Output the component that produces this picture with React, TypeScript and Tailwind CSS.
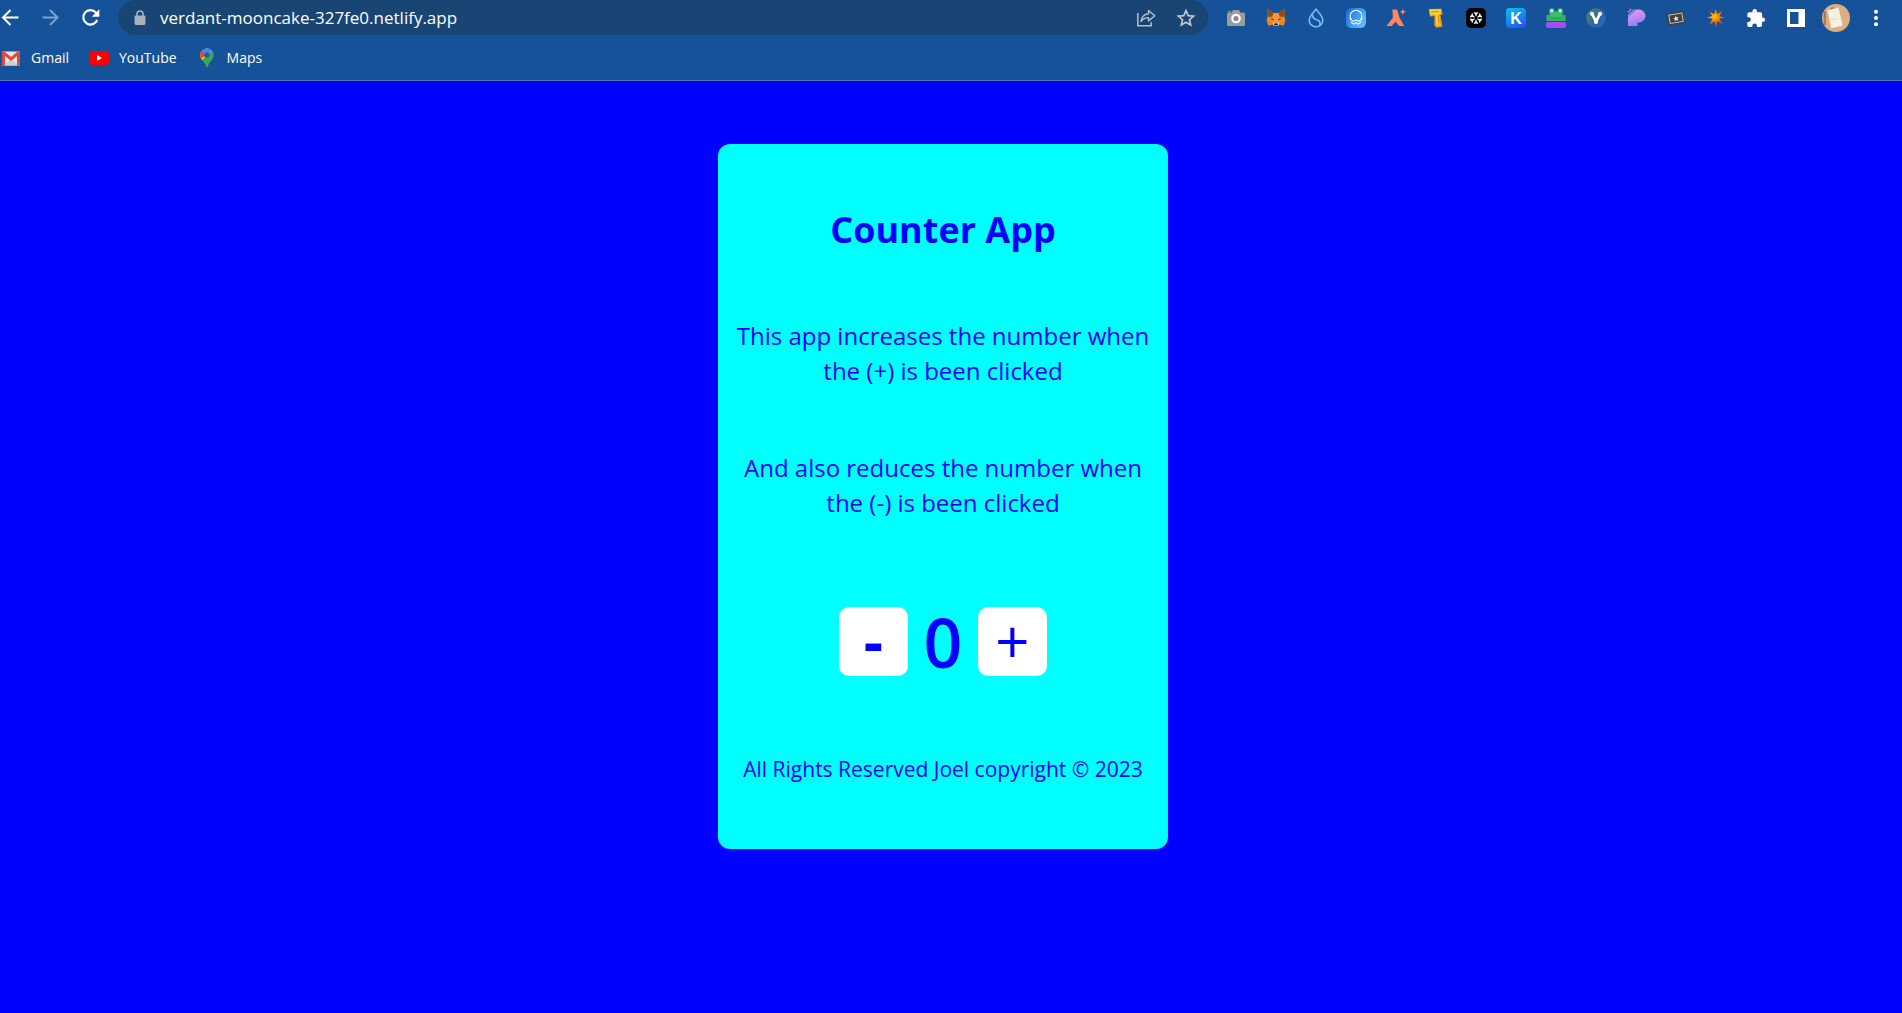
import { useState, type ReactNode } from "react";

const S = ({ children, size = 20 }: { children: ReactNode; size?: number }) => (
  <svg width={size} height={size} viewBox="0 0 20 20" fill="none" aria-hidden="true" className="shrink-0">
    {children}
  </svg>
);

const Back = () => (
  <S>
    <path d="M18.500 9.500H3.500M10.500 2 3 9.500l7.500 7.500" stroke="#fff" strokeWidth="2" />
  </S>
);
const Forward = () => (
  <S>
    <path d="M2.500 9.500H17M10 2l7.500 7.500L10 17" stroke="#7f9fc9" strokeWidth="2" />
  </S>
);
const Reload = () => (
  <S>
    <path d="M17.200 12A7.200 7.200 0 1 1 15.800 4.400L17 5.800" stroke="#fff" strokeWidth="2.200" />
    <path d="M19.300 1.200v7.500h-7.500z" fill="#fff" />
  </S>
);
const Lock = () => (
  <svg width="12" height="16" viewBox="0 0 12 16" fill="none" aria-hidden="true">
    <rect x="0.500" y="5.500" width="11" height="9.500" rx="1.400" fill="#a9b1ba" />
    <path d="M3 6V4a3 3 0 0 1 6 0v2" stroke="#a9b1ba" strokeWidth="1.600" />
  </svg>
);
const Share = () => (
  <S>
    <path d="M1.800 5v12.700h13.400v-3.500" stroke="#b6bfc9" strokeWidth="1.500" />
    <path d="M5 13.500c.6-4.600 3-7.300 7.500-7.700V2.500L18.800 7.700l-6.300 5.200V9.600c-3.500 0-5.500 1.100-7.500 3.900z" stroke="#b6bfc9" strokeWidth="1.400" strokeLinejoin="round" />
  </S>
);
const Star = () => (
  <S>
    <path d="M10 2.600l2.200 5 5.400.5-4.100 3.600 1.200 5.300L10 14.200 5.300 17l1.200-5.300L2.400 8.100l5.400-.5z" stroke="#c0c7cf" strokeWidth="1.700" />
  </S>
);
const Camera = () => (
  <S>
    <path d="M2.500 4.500h3.200L7 2h6l1.300 2.500h3.200A1.500 1.500 0 0 1 19 6v10.500a1.500 1.500 0 0 1-1.500 1.500h-15A1.500 1.500 0 0 1 1 16.500V6a1.500 1.500 0 0 1 1.500-1.500z" fill="#9c9c9c" />
    <path d="M2 2.800h3v1.700H2z" fill="#8a8a8a" />
    <circle cx="10" cy="10.500" r="3.700" stroke="#fff" strokeWidth="2.200" fill="#8b8b8b" />
  </S>
);
const Fox = () => (
  <S>
    <path d="M.8.8 8 5h4L19.200.8l-.7 8 .9 4-1.800 5-4.600-1.200L11.500 18h-3L7 16.600l-4.600 1.200-1.800-5 .9-4z" fill="#f0851f" />
    <path d="M.8.8 8 5.200 6 8.500l-4.300.5zM19.200.8 12 5.200l2 3.300 4.300.5z" fill="#8a4b1d" />
    <path d="M7.500 5h5l1 8-3.500 2-3.500-2z" fill="#f59638" />
    <path d="M4.500 10.500l3 .4.300 1.600zM15.500 10.500l-3 .4-.3 1.600z" fill="#233447" />
    <path d="M6.500 13.500l2 1.500h3l2-1.500-.5 3.400L11.500 18h-3L7 16.900z" fill="#d8cdc3" />
    <path d="M8.400 15.500h3.200l.3 1.800h-3.800z" fill="#161616" />
  </S>
);
const Drop = () => (
  <S>
    <path d="M10 1.200c2.300 3.200 6.800 6.800 6.800 11.200a6.800 6.400 0 0 1-13.600 0C3.200 8 7.700 4.400 10 1.200z" stroke="#6fbcf0" strokeWidth="1.700" />
    <path d="M6.600 6.500c-.4 3.200 1.500 4.500 4.200 5.300 2.500.8 3.800 2.400 3 5.300" stroke="#6fbcf0" strokeWidth="1.700" />
  </S>
);
const Wave = () => (
  <S>
    <defs>
      <linearGradient id="wave" x1="0" y1="0" x2="1" y2="0.600">
        <stop stopColor="#1767e8" />
        <stop offset="1" stopColor="#58bdfa" />
      </linearGradient>
    </defs>
    <rect width="20" height="20" rx="5.500" fill="url(#wave)" />
    <path d="M5.200 11.300a5.800 5.800 0 1 1 9.600 0" stroke="#fff" strokeWidth="1.200" />
    <path d="M3.500 10.800c1.600 0 2.600 2.400 4 2.400 1.200 0 1.400-1.200 2.500-1.200s1.300 1.200 2.500 1.200c1.400 0 2.400-2.400 4-2.400M4.500 14c1.400 0 2 2 3.200 2s1.200-1.300 2.300-1.300 1.100 1.300 2.300 1.300 1.800-2 3.200-2" stroke="#fff" strokeWidth="1.100" />
  </S>
);
const Peak = () => (
  <S>
    <path d="M6.300 1.500h4.900l2.300 8 4.700 8.500h-5L9.500 13.800 5.700 18H.5L7 9.500z" fill="#fb8663" />
    <path d="M16.800.6l.9 2.300 2.300.9-2.300.9-.9 2.300-.9-2.300-2.300-.9 2.300-.9z" fill="#fb8663" />
  </S>
);
const Hammer = () => (
  <S>
    <path d="M3 1 15.500.8l1 5.700-2.200.5 2.200 11.500-6 1.200L8.300 17.500 8.500 8l-4.700.4z" fill="#f29a1f" />
    <path d="M3.500 1.500l11-.3.300 4-2 .4 1.500 11.500-3.800.7L9.800 6.500l-5.600.3z" fill="#ffd633" />
    <path d="M5 4l8-.5M11.800 7l1.400 9.500" stroke="#e8731b" strokeWidth="1" />
  </S>
);
const Snow = () => (
  <S>
    <rect width="20" height="20" rx="5" fill="#000" />
    {[0, 60, 120, 180, 240, 300].map((a) => (
      <g key={a} transform={`rotate(${a} 10 10)`}>
        <path d="M10 8.300V4" stroke="#fff" strokeWidth="1.100" />
        <path d="M8 4.300l2 2.200 2-2.200" stroke="#fff" strokeWidth="1.100" />
      </g>
    ))}
  </S>
);
const KLogo = () => (
  <S>
    <defs>
      <linearGradient id="kl" x1="0.200" y1="0" x2="0.700" y2="1">
        <stop stopColor="#08bdf5" />
        <stop offset="1" stopColor="#2456ee" />
      </linearGradient>
    </defs>
    <rect width="20" height="20" rx="3.500" fill="url(#kl)" />
    <text x="10" y="16" textAnchor="middle" fontFamily="Liberation Sans, sans-serif" fontWeight="700" fontSize="16" fill="#fff">K</text>
  </S>
);
const Frog = () => (
  <S>
    <rect x="0" y="14" width="20" height="6" rx="2" fill="#a54cf5" />
    <path d="M3.500 3.500h13V13h-13z" fill="#3bbf6c" />
    <circle cx="5.800" cy="3" r="2.700" fill="#3bbf6c" />
    <circle cx="14.200" cy="3" r="2.700" fill="#3bbf6c" />
    <circle cx="5.800" cy="2.800" r="1.500" fill="#e9fff0" />
    <circle cx="14.200" cy="2.800" r="1.500" fill="#e9fff0" />
    <path d="M.5 7h3l2 2h9l2-2h3v6H.5z" fill="#34b566" />
    <path d="M5 10h10" stroke="#289552" strokeWidth="1" />
  </S>
);
const Vee = () => (
  <S>
    <defs>
      <linearGradient id="ve" x1="0" y1="0" x2="1" y2="1">
        <stop stopColor="#4a8f58" />
        <stop offset="0.600" stopColor="#2f66a4" />
        <stop offset="1" stopColor="#2d62c8" />
      </linearGradient>
    </defs>
    <circle cx="10" cy="10" r="9.800" fill="url(#ve)" />
    <path d="M6.300 6 10 14l3.700-8" stroke="#fff" strokeWidth="2.700" strokeLinecap="round" strokeLinejoin="round" />
    <circle cx="5.900" cy="5.800" r="2" fill="#fff" />
    <circle cx="14.100" cy="5.800" r="2" fill="#fff" />
    <circle cx="10" cy="14" r="2" fill="#fff" />
  </S>
);
const Pea = () => (
  <S>
    <defs>
      <linearGradient id="pe" x1="0.300" y1="0" x2="0.600" y2="1">
        <stop stopColor="#e79ae8" />
        <stop offset="1" stopColor="#8d7df5" />
      </linearGradient>
    </defs>
    <path d="M10 1.500h3a6.400 6.400 0 0 1 0 12.900h-1.500V18H2V9z" fill="url(#pe)" />
    <path d="M2 4.500 5.300 1M2 8 8.500 1.200" stroke="#c98ae8" strokeWidth="1.100" />
  </S>
);
const Ticket = () => (
  <S>
    <g transform="rotate(-9 10 10)">
      <rect x="1" y="4" width="18" height="12.500" rx="2" fill="#3f4142" />
      <rect x="3.400" y="6" width="13.200" height="8.500" stroke="#c9c9c9" strokeWidth="1" />
      <path d="M10 7.600l.8 1.900 2.100.2-1.600 1.300.5 2-1.800-1.100L8.200 13l.5-2-1.600-1.300 2.100-.2z" fill="#eee" />
    </g>
  </S>
);
const Spark = () => (
  <S>
    <defs>
      <radialGradient id="sp" cx="0.400" cy="0.400">
        <stop stopColor="#ffc400" />
        <stop offset="1" stopColor="#e8461b" />
      </radialGradient>
    </defs>
    <path d="M10 .5l1 5.500 5.300-3.200-2.900 5.400 6.100 1.300-6 1.300 3.500 5.700-5.600-3.500L10 19.500l-1.400-6.200-5.800 4 3.600-6.200L.5 9.500l5.700-1.400L3.200 3.500l5 2.800z" fill="url(#sp)" />
  </S>
);
const Puzzle = () => (
  <S>
    <path d="M17.300 9.500h-1.200V6a1.700 1.700 0 0 0-1.700-1.700h-3.500V3.100a2.200 2.200 0 0 0-4.400 0v1.200H3A1.700 1.700 0 0 0 1.400 6v3.300h1.200a2.300 2.300 0 0 1 0 4.600H1.300v3.300A1.700 1.700 0 0 0 3 18.900h3.300v-1.200a2.300 2.300 0 0 1 4.600 0v1.200h3.400a1.700 1.700 0 0 0 1.700-1.700v-3.400h1.300a2.200 2.200 0 0 0 0-4.300z" fill="#fff" />
  </S>
);
const Panel = () => (
  <S>
    <path d="M1 1h18v18H1zM4 4v12h8.500V4z" fill="#fff" fillRule="evenodd" />
  </S>
);
const Avatar = () => (
  <S size={28}>
    <circle cx="10" cy="10" r="10" fill="#dfae7e" />
    <path d="M2 5.500v9.500" stroke="#6e4b36" strokeWidth="1.600" strokeDasharray="0.700 0.700" />
    <path d="M3.600 4.300 12 2.300l3 13.200-8.500 2.200z" fill="#f6f1e2" stroke="#c8b595" strokeWidth="0.500" />
    <path d="M6.300 11.500l1-1.500 1 1.300 3.300-.8" stroke="#d0ccc4" strokeWidth="0.500" />
    <path d="M6.200 3.300l2.300-.6" stroke="#7b736a" strokeWidth="0.800" />
  </S>
);
const Dots = () => (
  <S>
    <circle cx="10" cy="3.700" r="2" fill="#fff" />
    <circle cx="10" cy="10" r="2" fill="#fff" />
    <circle cx="10" cy="16.300" r="2" fill="#fff" />
  </S>
);

const Gmail = () => (
  <S>
    <path d="M1 3.500h18v14H1z" fill="#e9e7e4" />
    <path d="M3 17.500 10 11l7 6.500z" fill="#cfcdca" />
    <path d="M1 3.500h2.500L10 9l6.500-5.500H19v14h-3V8l-6 5-6-5v9.500H1z" fill="#dc4a3d" />
  </S>
);
const YouTube = () => (
  <S>
    <rect y="3" width="20" height="14" rx="3.500" fill="#f00" />
    <path d="M8 7v6l5-3z" fill="#fff" />
  </S>
);
const Maps = () => (
  <S>
    <clipPath id="pin">
      <path d="M10 .5a6.700 6.700 0 0 1 6.700 6.700c0 4.800-4.700 6-5.700 11.300-.3 1.300-1.700 1.300-2 0C8 13.200 3.300 12 3.300 7.200A6.700 6.700 0 0 1 10 .5z" />
    </clipPath>
    <g clipPath="url(#pin)">
      <path d="M0 0h20v20H0z" fill="#34a853" />
      <path d="M0 0h20v1L10 7 3 15H0z" fill="#fbbc04" />
      <path d="M0 0h8l2 7-6 3H0z" fill="#ea4335" />
      <path d="M4.500 3 8 0h12l-5 3.500L10 8z" fill="#4285f4" />
    </g>
    <circle cx="10" cy="7" r="2.600" fill="#1f5aa8" />
  </S>
);

const extensions: [string, () => ReactNode][] = [
  ["Screenshot", Camera],
  ["Fox wallet", Fox],
  ["Drop wallet", Drop],
  ["Wave wallet", Wave],
  ["Peak wallet", Peak],
  ["Hammer", Hammer],
  ["Snowflake", Snow],
  ["K wallet", KLogo],
  ["Frog", Frog],
  ["V wallet", Vee],
  ["Pea wallet", Pea],
  ["Ticket", Ticket],
  ["Spark", Spark],
  ["Extensions", Puzzle],
  ["Side panel", Panel],
  ["Profile", Avatar],
  ["Menu", Dots],
];

const bookmarks: [string, () => ReactNode][] = [
  ["Gmail", Gmail],
  ["YouTube", YouTube],
  ["Maps", Maps],
];

function BrowserBar() {
  return (
    <header className="border-b border-[#4a7bb0] bg-[#155299] font-['Segoe_UI','Open_Sans',sans-serif] text-white">
      <div className="flex h-[35px] items-center pr-1.5">
        <div className="flex shrink-0 gap-5">
          <button aria-label="Back"><Back /></button>
          <button aria-label="Forward"><Forward /></button>
          <button aria-label="Reload"><Reload /></button>
        </div>
        <div className="mr-2 ml-[18px] flex h-full min-w-0 flex-1 items-center rounded-full bg-[#194575] pr-3 pl-4">
          <Lock />
          <input
            aria-label="Address"
            defaultValue="verdant-mooncake-327fe0.netlify.app"
            className="ml-3.5 min-w-0 flex-1 bg-transparent text-[17px] leading-6 outline-none"
          />
          <div className="flex shrink-0 gap-5">
            <button aria-label="Share"><Share /></button>
            <button aria-label="Bookmark this page"><Star /></button>
          </div>
        </div>
        {extensions.map(([name, Icon]) => (
          <button key={name} aria-label={name} className="flex w-10 shrink-0 justify-center">
            <Icon />
          </button>
        ))}
      </div>
      <nav aria-label="Bookmarks" className="flex h-[45px] items-center gap-5 pl-px">
        {bookmarks.map(([name, Icon]) => (
          <a key={name} href="#" className="flex items-center gap-2.5 text-sm">
            <Icon />
            {name}
          </a>
        ))}
      </nav>
    </header>
  );
}

export default function App() {
  const [count, setCount] = useState(0);
  const square =
    "flex size-[69px] items-center justify-center rounded-[10px] bg-white font-['Open_Sans',sans-serif] text-[60px] leading-[69px]";

  return (
    <div className="flex min-h-screen flex-col bg-[#0000ff]">
      <BrowserBar />
      <main className="flex justify-center pt-[63px] pr-4">
        <section className="w-full max-w-[450px] rounded-xl bg-[#00ffff] px-3 pt-14 pb-[66px] text-center font-['Comic_Sans_MS','Open_Sans',sans-serif] text-[#0000ff]">
          <h1 className="text-4xl leading-[60px] font-bold">Counter App</h1>
          <p className="mt-[58px] text-2xl leading-[35px]">
            This app increases the number when <br />the (+) is been clicked
          </p>
          <p className="mt-[62px] text-2xl leading-[35px]">
            And also reduces the number when <br />the (-) is been clicked
          </p>
          <div className="mt-[87px] flex items-center justify-center">
            <button aria-label="Decrease" onClick={() => setCount(count - 1)} className={square}>
              <span className="font-bold">-</span>
            </button>
            <output className="min-w-[70px] font-['Open_Sans',sans-serif] text-[68px] leading-[69px] font-semibold">
              {count}
            </output>
            <button aria-label="Increase" onClick={() => setCount(count + 1)} className={square}>
              <span className="font-medium">+</span>
            </button>
          </div>
          <p className="mt-[79px] text-[21px] leading-7">All Rights Reserved Joel copyright © 2023</p>
        </section>
      </main>
    </div>
  );
}
